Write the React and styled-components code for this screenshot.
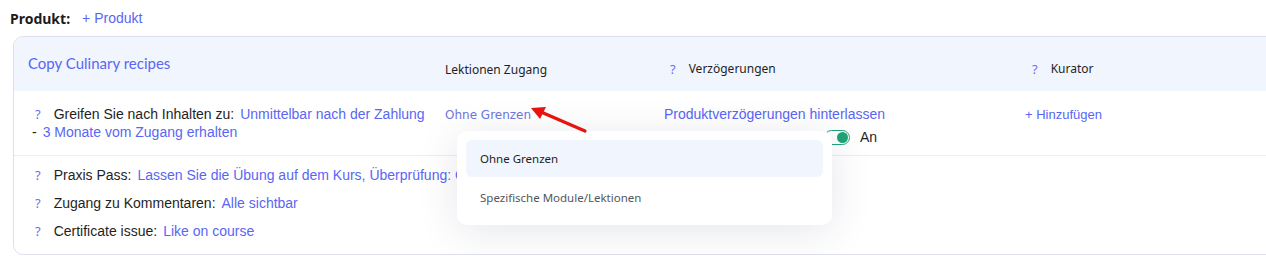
import React from 'react';
import styled, { createGlobalStyle } from 'styled-components';

const GlobalStyle = createGlobalStyle`
    html, body {
        margin: 0;
        padding: 0;
        background: #ffffff;
        overflow: hidden;
    }
    body {
        font-family: "Liberation Sans", Arial, sans-serif;
        color: #1f1f24;
    }
`;

const Page = styled.div`
    padding: 8px 0 0 10px;
    width: 1320px;
`;

const ProductBar = styled.div`
    display: flex;
    align-items: center;
    gap: 12px;
    height: 20px;
`;

const ProductLabel = styled.span`
    font-family: "Noto Sans", sans-serif;
    font-weight: 700;
    font-size: 14px;
    color: #1b1b1f;
`;

const Link = styled.a`
    color: ${p => p.muted ? '#6f76dc' : '#5a66f3'};
    font-size: ${p => p.size || 14}px;
    font-family: ${p => p.muted ? '"DejaVu Sans", sans-serif' : '"Liberation Sans", Arial, sans-serif'};
    text-decoration: none;
    cursor: pointer;
    white-space: nowrap;
`;

const Card = styled.div`
    margin: 8px 0 0 3px;
    border: 1px solid #dedfec;
    border-radius: 10px;
    width: 1300px;
    padding-bottom: 9px;
`;

const Grid = styled.div`
    display: grid;
    grid-template-columns: 417px 219px 361px 1fr;
    padding: 0 0 0 14px;
`;

const Header = styled(Grid)`
    background: #f1f5fe;
    border-radius: 10px 10px 0 0;
    height: 54px;
    align-items: center;
`;

const Title = styled.div`
    font-family: Lato, sans-serif;
    font-size: 15px;
    color: #5a66f3;
    margin-top: -2px;
`;

const ColHead = styled.div`
    font-family: "Noto Sans", sans-serif;
    font-size: 12px;
    color: #1f1f24;
    margin-top: 10px;
    padding-left: ${p => p.indent || 0}px;
    display: flex;
    gap: 13px;
`;

const Hint = styled.span`
    color: #6a6ef0;
    font-family: "Noto Sans", sans-serif;
    font-size: 13px;
`;

const AccessRow = styled(Grid)`
    padding-top: 14px;
    height: 50px;
    border-bottom: 1px solid #ececf1;
    margin-right: 14px;
`;

const Cell = styled.div`
    position: relative;
    font-size: 14px;
    line-height: 18px;
`;

const Line = styled.div`
    display: flex;
    align-items: center;
    gap: 6px;
    padding-left: ${p => p.indent || 0}px;
    font-size: 14px;
    line-height: 18px;
    white-space: nowrap;
`;

const Label = styled.span`
    color: #1f1f24;
    margin-left: 7px;
`;

const ToggleLine = styled.div`
    display: flex;
    align-items: center;
    gap: 10px;
    margin: 5px 0 0 160px;
    font-size: 14px;
`;

const Toggle = styled.span`
    position: relative;
    width: 24px;
    height: 13px;
    border: 1.5px solid #23a376;
    border-radius: 8px;
    display: inline-block;

    &::after {
        content: '';
        position: absolute;
        right: 1px;
        top: 1px;
        width: 11px;
        height: 11px;
        border-radius: 50%;
        background: #23a376;
    }
`;

const Settings = styled.div`
    padding: 5px 0 0 14px;
    display: flex;
    flex-direction: column;
`;

const SettingLine = styled(Line)`
    height: 28px;
`;

const Dropdown = styled.div`
    position: absolute;
    left: 12px;
    top: 26px;
    width: 375px;
    height: 94px;
    background: #ffffff;
    border-radius: 10px;
    box-shadow: 0 6px 40px rgba(40, 50, 90, 0.12);
    padding: 9px;
    box-sizing: border-box;
    z-index: 5;
    display: flex;
    flex-direction: column;
`;

const Option = styled.div`
    font-family: "Noto Sans", sans-serif;
    font-size: 11.5px;
    height: ${p => p.active ? 37 : 42}px;
    flex-shrink: 0;
    display: flex;
    align-items: center;
    padding-left: 14px;
    border-radius: 6px;
    background: ${p => p.active ? '#f1f5fe' : 'transparent'};
    color: ${p => p.active ? '#1f1f24' : '#55565c'};
`;

const Arrow = styled.svg`
    position: absolute;
    left: 84px;
    top: 3px;
    z-index: 6;
    overflow: visible;
`;

const App = () => {
    const settings = [
        { label: 'Praxis Pass:', value: 'Lassen Sie die Übung auf dem Kurs, Überprüfung: Gegenseitige Prüfung' },
        { label: 'Zugang zu Kommentaren:', value: 'Alle sichtbar' },
        { label: 'Certificate issue:', value: 'Like on course' }
    ];

    return (
        <>
            <GlobalStyle />
            <Page>
                <ProductBar>
                    <ProductLabel>Produkt:</ProductLabel>
                    <Link>+ Produkt</Link>
                </ProductBar>
                <Card>
                    <Header>
                        <Title>Copy Culinary recipes</Title>
                        <ColHead>Lektionen Zugang</ColHead>
                        <ColHead indent={6}><Hint>?</Hint>Verzögerungen</ColHead>
                        <ColHead indent={7}><Hint>?</Hint>Kurator</ColHead>
                    </Header>
                    <AccessRow>
                        <Cell>
                            <Line indent={7}>
                                <Hint>?</Hint>
                                <Label>Greifen Sie nach Inhalten zu:</Label>
                                <Link>Unmittelbar nach der Zahlung</Link>
                            </Line>
                            <Line indent={4}>
                                <span>-</span>
                                <Link>3 Monate vom Zugang erhalten</Link>
                            </Line>
                        </Cell>
                        <Cell>
                            <Link muted size={12}>Ohne Grenzen</Link>
                            <Arrow width="60" height="30">
                                <line x1="56" y1="23" x2="12" y2="4" stroke="#e8120f" strokeWidth="3.2" strokeLinecap="round" />
                                <polygon points="2,0 17,-1 11,11" fill="#e8120f" />
                            </Arrow>
                            <Dropdown>
                                <Option active>Ohne Grenzen</Option>
                                <Option>Spezifische Module/Lektionen</Option>
                            </Dropdown>
                        </Cell>
                        <Cell>
                            <Link>Produktverzögerungen hinterlassen</Link>
                            <ToggleLine>
                                <Toggle />
                                <span>An</span>
                            </ToggleLine>
                        </Cell>
                        <Cell>
                            <Link size={13}>+ Hinzufügen</Link>
                        </Cell>
                    </AccessRow>
                    <Settings>
                        {settings.map((s, idx) => (
                            <SettingLine key={idx} indent={7}>
                                <Hint>?</Hint>
                                <Label>{s.label}</Label>
                                <Link>{s.value}</Link>
                            </SettingLine>
                        ))}
                    </Settings>
                </Card>
            </Page>
        </>
    );
};

export default App;
